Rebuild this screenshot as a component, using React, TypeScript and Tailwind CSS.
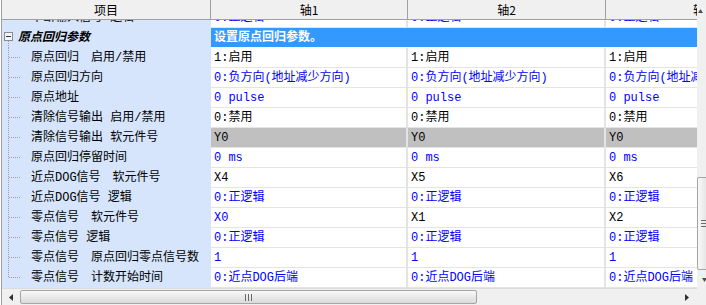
import clsx from 'clsx'

type Tone = 'b' | 'k'
type Row = { label: string; cells: [string, Tone][]; gray?: boolean }

const rows: Row[] = [
  { label: '原点回归\u3000启用/禁用', cells: [['1:启用', 'k'], ['1:启用', 'k'], ['1:启用', 'k']] },
  { label: '原点回归方向', cells: [['0:负方向(地址减少方向)', 'b'], ['0:负方向(地址减少方向)', 'b'], ['0:负方向(地址减少方向)', 'b']] },
  { label: '原点地址', cells: [['0 pulse', 'b'], ['0 pulse', 'b'], ['0 pulse', 'b']] },
  { label: '清除信号输出 启用/禁用', cells: [['0:禁用', 'k'], ['0:禁用', 'k'], ['0:禁用', 'k']] },
  { label: '清除信号输出 软元件号', cells: [['Y0', 'k'], ['Y0', 'k'], ['Y0', 'k']], gray: true },
  { label: '原点回归停留时间', cells: [['0 ms', 'b'], ['0 ms', 'b'], ['0 ms', 'b']] },
  { label: '近点DOG信号\u3000软元件号', cells: [['X4', 'k'], ['X5', 'k'], ['X6', 'k']] },
  { label: '近点DOG信号 逻辑', cells: [['0:正逻辑', 'b'], ['0:正逻辑', 'b'], ['0:正逻辑', 'b']] },
  { label: '零点信号\u3000软元件号', cells: [['X0', 'b'], ['X1', 'k'], ['X2', 'k']] },
  { label: '零点信号 逻辑', cells: [['0:正逻辑', 'b'], ['0:正逻辑', 'b'], ['0:正逻辑', 'b']] },
  { label: '零点信号\u3000原点回归零点信号数', cells: [['1', 'b'], ['1', 'b'], ['1', 'b']] },
  { label: '零点信号\u3000计数开始时间', cells: [['0:近点DOG后端', 'b'], ['0:近点DOG后端', 'b'], ['0:近点DOG后端', 'b']] },
]

const colW = ['w-[197px] shrink-0 border-r-2', 'w-[198px] shrink-0 border-r-2', 'flex-1 min-w-0']

function TreeStub({ last }: { last: boolean }) {
  return (
    <svg width="20" height="20" className="shrink-0" shapeRendering="crispEdges">
      <line x1="6.5" y1="0" x2="6.5" y2={last ? 10 : 20} stroke="#a0a0a0" strokeDasharray="1 1" />
      <line x1="7" y1="9.5" x2="19" y2="9.5" stroke="#a0a0a0" strokeDasharray="1 1" />
    </svg>
  )
}

function ValueCells({ cells, gray }: { cells: [string, Tone][]; gray?: boolean }) {
  return (
    <>
      {cells.map(([text, tone], i) => (
        <div
          key={i}
          className={clsx(
            'flex items-center overflow-hidden whitespace-pre border-b border-[#e4e4e4] pl-[3px] leading-[14px]',
            colW[i],
            gray ? 'bg-[#c0c0c0]' : 'bg-white',
            tone === 'b' ? 'text-[#0000ff]' : 'text-black',
          )}
        >
          {text}
        </div>
      ))}
    </>
  )
}

function DataRow({ row, last }: { row: Row; last: boolean }) {
  return (
    <div className="flex h-[20px]">
      <div className="flex w-[209px] shrink-0 items-center bg-[#d6e5fb]">
        <TreeStub last={last} />
        <span className="ml-[9px] whitespace-pre leading-[14px] text-black">{row.label}</span>
      </div>
      <ValueCells cells={row.cells} gray={row.gray} />
    </div>
  )
}

function Table() {
  return (
    <div className="flex w-[695px] flex-col font-['Liberation_Mono','Noto_Sans_CJK_SC',monospace] text-[12px]">
      {/* header */}
      <div className="flex h-[20px] border-b border-[#a0a0a0] bg-[#f0f0f0] font-['Noto_Sans_CJK_SC',sans-serif] text-black">
        <div className="flex w-[209px] shrink-0 items-center justify-center border-r border-[#a0a0a0]">项目</div>
        <div className="flex w-[197px] shrink-0 items-center justify-center border-r border-[#a0a0a0]">轴1</div>
        <div className="flex w-[198px] shrink-0 items-center justify-center border-r border-[#a0a0a0]">轴2</div>
        <div className="flex min-w-0 flex-1 items-center overflow-hidden whitespace-nowrap pl-[87px]">轴3</div>
      </div>

      {/* row scrolled half out of view */}
      <div className="h-[8px] overflow-hidden">
        <div className="-mt-[12px] flex h-[20px]">
          <div className="flex w-[209px] shrink-0 items-center bg-[#d6e5fb]">
            <span className="ml-[29px] whitespace-pre leading-[14px]">中断输入信号 逻辑</span>
          </div>
          <ValueCells cells={[['0:正逻辑', 'b'], ['0:正逻辑', 'b'], ['0:正逻辑', 'b']]} />
        </div>
      </div>

      {/* group row */}
      <div className="flex h-[20px]">
        <div className="flex w-[209px] shrink-0 items-center bg-[#d6e5fb]">
          <svg width="14" height="20" className="shrink-0" shapeRendering="crispEdges">
            <rect x="2.5" y="4.5" width="8" height="8" fill="#f4f4f4" stroke="#8c8c8c" />
            <line x1="4" y1="8.5" x2="9" y2="8.5" stroke="#1e3c78" />
            <line x1="6.5" y1="13" x2="6.5" y2="20" stroke="#a0a0a0" strokeDasharray="1 1" />
          </svg>
          <span className="ml-[2px] font-bold italic leading-[14px] text-black">原点回归参数</span>
        </div>
        <div className="flex flex-1 items-center border-b border-white bg-[#3399ff] pl-[3px] font-bold leading-[14px] text-white">
          设置原点回归参数。
        </div>
      </div>

      {rows.map((r, i) => (
        <DataRow key={i} row={r} last={i === rows.length - 1} />
      ))}
    </div>
  )
}

function VScroll() {
  return (
    <div className="flex h-[288px] w-[9px] shrink-0 flex-col overflow-hidden bg-[#f0f0f0]">
      <svg width="5" height="4" className="ml-[1px] mt-[9px] shrink-0">
        <polygon points="2.5,0 5,4 0,4" fill="#505050" />
      </svg>
      <div className="ml-0 mt-[164px] flex h-[93px] w-[15px] shrink-0 flex-col items-center justify-center gap-[2px] rounded-[2px] border border-[#a5a5a5] bg-gradient-to-r from-[#f8f8f8] to-[#dcdcdc]">
        <div className="h-px w-[7px] bg-[#6a6a6a]" />
        <div className="h-px w-[7px] bg-[#6a6a6a]" />
        <div className="h-px w-[7px] bg-[#6a6a6a]" />
      </div>
      <svg width="5" height="4" className="ml-[5px] mt-[8px] shrink-0">
        <polygon points="0,0 5,0 2.5,4" fill="#505050" />
      </svg>
    </div>
  )
}

function HScroll() {
  return (
    <div className="flex h-[17px] w-[695px] items-center border-t border-[#dcdcdc] bg-[#f0f0f0]">
      <div className="flex w-[18px] shrink-0 justify-center">
        <svg width="4" height="7">
          <polygon points="4,0 4,7 0,3.5" fill="#303030" />
        </svg>
      </div>
      <div className="flex h-[14px] w-[457px] shrink-0 items-center justify-center gap-[2px] rounded-[2px] border border-[#a5a5a5] bg-gradient-to-b from-[#f8f8f8] to-[#dadada]">
        <div className="h-[7px] w-px bg-[#6a6a6a]" />
        <div className="h-[7px] w-px bg-[#6a6a6a]" />
        <div className="h-[7px] w-px bg-[#6a6a6a]" />
      </div>
      <div className="flex-1" />
      <div className="flex w-[20px] shrink-0 justify-center">
        <svg width="4" height="7">
          <polygon points="0,0 4,3.5 0,7" fill="#303030" />
        </svg>
      </div>
    </div>
  )
}

export default function App() {
  return (
    <div className="h-[305px] w-[706px] overflow-hidden bg-white pl-px">
      <div className="flex">
        <div className="flex flex-col border-l border-[#a0a0a0]">
          <Table />
          <HScroll />
        </div>
        <div className="flex flex-col">
          <VScroll />
          <div className="h-[17px] w-[9px] bg-[#f0f0f0]" />
        </div>
      </div>
    </div>
  )
}
